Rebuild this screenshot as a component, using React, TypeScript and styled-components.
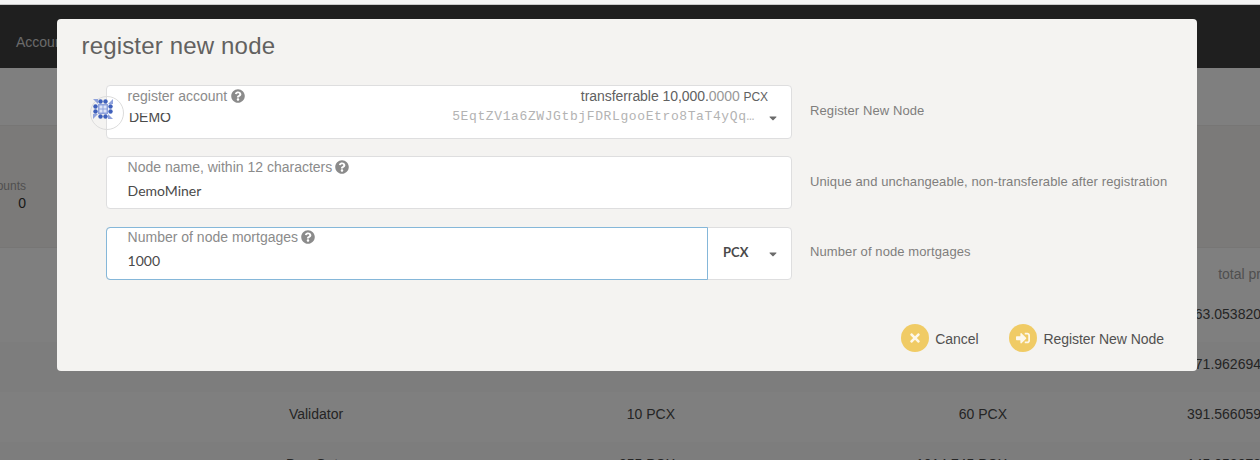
import React from "react";
import styled, { createGlobalStyle, css } from "styled-components";
import { FaCaretDown, FaQuestionCircle, FaSignInAlt, FaTimes } from "react-icons/fa";

const GlobalStyle = createGlobalStyle`
  * { box-sizing: border-box; }
  body {
    margin: 0;
    overflow: hidden;
    font-family: "Liberation Sans", Arial, sans-serif;
    font-size: 14px;
    color: #4e4e4e;
  }
`;

const Page = styled.div`
  height: 460px;
  display: flex;
  flex-direction: column;
  overflow: hidden;
  background: #fff;
`;

const BrowserEdge = styled.div`
  flex: none;
  height: 5px;
  background: #f4f4f4;
  border-bottom: 1px solid #c9c9c9;
`;

const NavBar = styled.nav`
  flex: none;
  height: 63px;
  padding: 29px 16px 0;
  background: #3f3f3f;
  color: #d4d4d4;
  line-height: 16px;
`;

const SubBar = styled.div`
  flex: none;
  height: 57px;
`;

const Summary = styled.section`
  flex: none;
  height: 123px;
  padding-top: 53px;
  background: #f7f5f2;
  border-top: 1px solid #efedeb;
  border-bottom: 1px solid #efedeb;
`;

const SummaryItem = styled.div`
  width: 26px;
  display: flex;
  flex-direction: column;
  align-items: flex-end;
  color: #333;
  line-height: 18px;

  small {
    font-size: 12px;
    line-height: 14px;
    color: #a0a0a0;
    margin-bottom: 1px;
  }
`;

const Table = styled.div`
  flex: 1;
  min-height: 0;
  overflow: hidden;
`;

const Row = styled.div<{ $head?: boolean; $striped?: boolean }>`
  display: grid;
  grid-template-columns: 632px 43px 332px 254px;
  height: ${(p) => (p.$head ? 44 : 50)}px;
  padding-top: ${(p) => (p.$head ? 18 : 14)}px;
  line-height: 16px;
  white-space: nowrap;
  background: ${(p) => (p.$striped ? "#fbfbfb" : "#fff")};
  color: ${(p) => (p.$head ? "#a0a0a0" : "#4a4a4a")};
`;

const Cell = styled.div<{ $align?: "center" | "end" }>`
  display: flex;
  justify-content: ${(p) => (p.$align === "center" ? "center" : "flex-end")};
`;

const Dimmer = styled.div`
  position: fixed;
  inset: 5px 0 0;
  display: flex;
  justify-content: center;
  align-items: flex-start;
  padding: 14px 6px 0 0;
  background: rgba(0, 0, 0, 0.5);
`;

const Dialog = styled.div`
  width: 1140px;
  height: 352px;
  padding: 13px 27px 0 24px;
  display: flex;
  flex-direction: column;
  border-radius: 4px;
  background: #f4f3f1;
`;

const Title = styled.h1`
  margin: 0 0 25px;
  height: 28px;
  font-size: 24px;
  font-weight: 400;
  line-height: 28px;
  letter-spacing: 0.17px;
  padding-left: 0.5px;
  color: #626160;
`;

const Form = styled.form`
  display: flex;
  flex-direction: column;
  padding-left: 25px;
`;

const FormRow = styled.div`
  display: flex;
  gap: 18px;
  height: 71px;
`;

const Hint = styled.p<{ $lineHeight?: number }>`
  margin: 0;
  font-size: 13px;
  line-height: ${(p) => p.$lineHeight ?? 51}px;
  letter-spacing: 0.1px;
  white-space: nowrap;
  color: #7f7e7d;
`;

const Field = styled.div<{ $height?: number }>`
  position: relative;
  width: 686px;
  height: ${(p) => p.$height ?? 53}px;
  display: flex;
  background: #fff;
  border: 1px solid #dededf;
  border-radius: 4px;
`;

const FieldBody = styled.div<{ $focused?: boolean }>`
  flex: 1;
  min-width: 0;
  padding: 2px 23px 0 20.6px;
  display: flex;
  flex-direction: column;

  ${(p) =>
    p.$focused &&
    css`
      margin: -1px 0 -1px -1px;
      padding: 1px 21px 0 20.6px;
      border: 1px solid #85b7d9;
      border-radius: 4px 0 0 4px;
    `}
`;

const LabelRow = styled.div`
  display: flex;
  justify-content: space-between;
  align-items: flex-start;
  height: 17px;
  line-height: 16px;
  white-space: nowrap;
`;

const Label = styled.label<{ $gap?: number }>`
  display: flex;
  align-items: center;
  gap: ${(p) => p.$gap ?? 3}px;
  color: #8b8b8b;
`;

const Balance = styled.span`
  letter-spacing: -0.06px;
  color: #616161;

  span { color: #989898; }
  small { font-size: 12px; }
`;

const Value = styled.div`
  margin-top: 6px;
  font-family: Lato, sans-serif;
  line-height: 17px;
  color: #4a4a4a;
`;

const AccountValue = styled.div`
  display: flex;
  align-items: flex-start;
  justify-content: space-between;
  height: 18px;
  margin: 4px 13px 0 1.4px;
  line-height: 16px;
`;

const AccountName = styled.span`
  clip-path: inset(4px 0 0 0);
  color: #4a4a4a;
`;

const Address = styled.span`
  margin-top: -1px;
  clip-path: inset(3px 0 0 0);
  font-family: "Liberation Mono", monospace;
  font-size: 13px;
  letter-spacing: 0.61px;
  line-height: 18px;
  color: #b3b3b3;
`;

const Caret = styled(FaCaretDown)<{ $top: number }>`
  position: absolute;
  right: 12px;
  top: ${(p) => p.$top}px;
  font-size: 12px;
  color: #6b6b6b;
`;

const Unit = styled.div`
  width: 83px;
  padding-left: 15px;
  font: 700 13px/48px Lato, sans-serif;
  color: #4a4a4a;
`;

const Avatar = styled.div`
  position: absolute;
  left: -17px;
  top: 10px;
  width: 34px;
  height: 34px;
  border: 1px solid #dcdcdc;
  border-radius: 50%;

  svg {
    display: block;
    margin: 2px 0 0 2px;
  }
`;

const Actions = styled.div`
  display: flex;
  justify-content: flex-end;
  gap: 31px;
  margin: 26px 6px 0 0;
`;

const ActionButton = styled.button`
  display: flex;
  align-items: center;
  gap: 6px;
  height: 28px;
  padding: 0;
  border: 0;
  background: none;
  font: inherit;
  line-height: 28px;
  letter-spacing: -0.05px;
  color: #525150;
`;

const ActionText = styled.span`
  padding-top: 2px;
  line-height: 16px;
`;

const ActionIcon = styled.span`
  width: 28px;
  height: 28px;
  display: flex;
  align-items: center;
  justify-content: center;
  border-radius: 50%;
  background: #f0cb65;
  color: #fdf8eb;
`;

const quarterTurns = [0, 90, 180, 270];

function Identicon() {
  return (
    <svg width="20" height="20" viewBox="0 0 20 20">
      {quarterTurns.map((angle) => (
        <g key={angle} transform={`rotate(${angle} 10 10)`}>
          <path d="M0 0H5V5Z" fill="#8fa2dc" />
          <circle cx="7.5" cy="2.5" r="2.2" fill="#3f60bb" />
          <circle cx="12.5" cy="2.5" r="2.2" fill="#3f60bb" />
        </g>
      ))}
      <path d="M5 5H15V15H5Z" fill="#8fa2dc" />
      <path d="M6.5 6.5H9.5V9.5H6.5ZM10.5 6.5H13.5V9.5H10.5ZM6.5 10.5H9.5V13.5H6.5ZM10.5 10.5H13.5V13.5H10.5Z" fill="#dfe5f7" />
    </svg>
  );
}

const nodes = [
  { name: "", self: "", total: "", profit: "163.053820" },
  { name: "", self: "", total: "", profit: "171.962694" },
  { name: "Validator", self: "10 PCX", total: "60 PCX", profit: "391.566059" },
  { name: "BearGate", self: "355 PCX", total: "1014.745 PCX", profit: "145.052073" },
];

export default function App() {
  return (
    <Page>
      <GlobalStyle />
      <BrowserEdge />
      <NavBar>Accounts</NavBar>
      <SubBar />
      <Summary>
        <SummaryItem>
          <small>ounts</small>
          <span>0</span>
        </SummaryItem>
      </Summary>
      <Table>
        <Row $head>
          <Cell />
          <Cell />
          <Cell />
          <Cell>total pr</Cell>
        </Row>
        {nodes.map((node, i) => (
          <Row key={node.profit} $striped={i % 2 === 1}>
            <Cell $align="center">{node.name}</Cell>
            <Cell>{node.self}</Cell>
            <Cell>{node.total}</Cell>
            <Cell>{node.profit}</Cell>
          </Row>
        ))}
      </Table>
      <Dimmer>
        <Dialog role="dialog">
          <Title>register new node</Title>
          <Form>
            <FormRow>
              <Field $height={54}>
                <FieldBody>
                  <LabelRow>
                    <Label $gap={4}>register account <FaQuestionCircle /></Label>
                    <Balance>
                      transferrable 10,000.<span>0000</span> <small>PCX</small>
                    </Balance>
                  </LabelRow>
                  <AccountValue>
                    <AccountName>DEMO</AccountName>
                    <Address>5EqtZV1a6ZWJGtbjFDRLgooEtro8TaT4yQq…</Address>
                  </AccountValue>
                </FieldBody>
                <Caret $top={26} />
                <Avatar><Identicon /></Avatar>
              </Field>
              <Hint>Register New Node</Hint>
            </FormRow>
            <FormRow>
              <Field>
                <FieldBody>
                  <LabelRow>
                    <Label>Node name, within 12 characters <FaQuestionCircle /></Label>
                  </LabelRow>
                  <Value>DemoMiner</Value>
                </FieldBody>
              </Field>
              <Hint>Unique and unchangeable, non-transferable after registration</Hint>
            </FormRow>
            <FormRow>
              <Field>
                <FieldBody $focused>
                  <LabelRow>
                    <Label>Number of node mortgages <FaQuestionCircle /></Label>
                  </LabelRow>
                  <Value>1000</Value>
                </FieldBody>
                <Unit>PCX</Unit>
                <Caret $top={20} />
              </Field>
              <Hint $lineHeight={49}>Number of node mortgages</Hint>
            </FormRow>
          </Form>
          <Actions>
            <ActionButton>
              <ActionIcon><FaTimes /></ActionIcon>
              <ActionText>Cancel</ActionText>
            </ActionButton>
            <ActionButton>
              <ActionIcon><FaSignInAlt /></ActionIcon>
              <ActionText>Register New Node</ActionText>
            </ActionButton>
          </Actions>
        </Dialog>
      </Dimmer>
    </Page>
  );
}
